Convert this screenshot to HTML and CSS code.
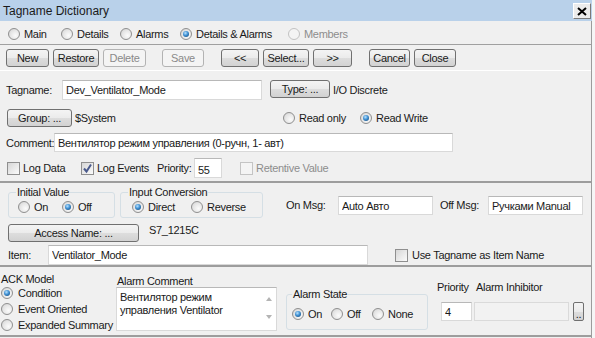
FILE: index.html
```html
<!DOCTYPE html>
<html lang="en">
<head>
    <meta charset="UTF-8">
    <meta name="viewport" content="width=device-width, initial-scale=1.0">
    <title>Tagname Dictionary</title>
    <link rel="stylesheet" href="styles.css">
</head>
<body>
    <div class="window">
        <div class="titlebar">
            <span class="title">Tagname Dictionary</span>
            <button class="close-btn" title="Close">
                <svg width="10" height="9" viewBox="0 0 10 9"><path d="M1 1 L9 8 M9 1 L1 8" stroke="#000" stroke-width="2"/></svg>
            </button>
        </div>

        <div class="frame">
            <!-- view selector -->
            <div class="tabs">
                <label class="opt"><span class="radio"></span>Main</label>
                <label class="opt"><span class="radio"></span>Details</label>
                <label class="opt"><span class="radio"></span>Alarms</label>
                <label class="opt"><span class="radio on"></span>Details &amp; Alarms</label>
                <label class="opt disabled"><span class="radio"></span>Members</label>
            </div>

            <div class="toolbar">
                <div class="btn-group g-edit">
                    <button class="btn">New</button>
                    <button class="btn">Restore</button>
                    <button class="btn" disabled>Delete</button>
                </div>
                <div class="btn-group g-save">
                    <button class="btn" disabled>Save</button>
                </div>
                <div class="btn-group g-nav">
                    <button class="btn">&lt;&lt;</button>
                    <button class="btn">Select...</button>
                    <button class="btn">&gt;&gt;</button>
                </div>
                <div class="btn-group g-close">
                    <button class="btn">Cancel</button>
                    <button class="btn">Close</button>
                </div>
            </div>

            <!-- main tag details -->
            <div class="panel panel-top">
                <div class="row row-tag">
                    <span>Tagname:</span>
                    <input class="field w-tag" type="text" value="Dev_Ventilator_Mode">
                    <button class="btn btn-type">Type: ...</button>
                    <span>I/O Discrete</span>
                </div>
                <div class="row row-group">
                    <button class="btn btn-group-sel">Group: ...</button>
                    <span>$System</span>
                    <label class="opt"><span class="radio"></span>Read only</label>
                    <label class="opt"><span class="radio on"></span>Read Write</label>
                </div>
                <div class="row row-comment">
                    <span>Comment:</span>
                    <input class="field w-comment" type="text" value="Вентилятор режим управления (0-ручн, 1- авт)">
                </div>
                <div class="row row-log">
                    <label class="opt"><span class="check"></span>Log Data</label>
                    <label class="opt"><span class="check checked"><svg width="11" height="11" viewBox="0 0 11 11"><path d="M2 5.5 L4.5 8.5 L9 1.5" fill="none" stroke="#4a5a8c" stroke-width="2"/></svg></span>Log Events</label>
                    <span>Priority:</span>
                    <input class="field w-prio" type="text" value="55">
                    <label class="opt disabled"><span class="check"></span>Retentive Value</label>
                </div>
            </div>

            <!-- discrete settings -->
            <div class="panel panel-mid">
                <div class="row row-discrete">
                    <fieldset class="fs fs-init">
                        <legend>Initial Value</legend>
                        <div class="fs-row">
                            <label class="opt"><span class="radio"></span>On</label>
                            <label class="opt"><span class="radio on"></span>Off</label>
                        </div>
                    </fieldset>
                    <fieldset class="fs fs-conv">
                        <legend>Input Conversion</legend>
                        <div class="fs-row">
                            <label class="opt"><span class="radio on"></span>Direct</label>
                            <label class="opt"><span class="radio"></span>Reverse</label>
                        </div>
                    </fieldset>
                    <span class="msg-label">On Msg:</span>
                    <input class="field w-msg" type="text" value="Auto Авто">
                    <span class="msg-label">Off Msg:</span>
                    <input class="field w-msg" type="text" value="Ручками Manual">
                </div>
                <div class="row row-access">
                    <button class="btn btn-access">Access Name: ...</button>
                    <span>S7_1215C</span>
                </div>
                <div class="row row-item">
                    <span>Item:</span>
                    <input class="field w-item" type="text" value="Ventilator_Mode">
                    <span class="check"></span>
                    <span>Use Tagname as Item Name</span>
                </div>
            </div>

            <!-- alarm settings -->
            <div class="panel panel-bottom">
                <div class="col col-ack">
                    <div class="col-label">ACK Model</div>
                    <label class="opt ack-opt"><span class="radio on"></span>Condition</label>
                    <label class="opt ack-opt"><span class="radio"></span>Event Oriented</label>
                    <label class="opt ack-opt"><span class="radio"></span>Expanded Summary</label>
                </div>
                <div class="col col-comment">
                    <div class="col-label">Alarm Comment</div>
                    <div class="memo">
                        <div class="memo-text">Вентилятор режим<br>управления Ventilator</div>
                        <div class="memo-scroll">
                            <span class="arrow-up"></span>
                            <span class="arrow-down"></span>
                        </div>
                    </div>
                </div>
                <div class="col col-state">
                    <fieldset class="fs fs-state">
                        <legend>Alarm State</legend>
                        <div class="fs-row">
                            <label class="opt"><span class="radio on"></span>On</label>
                            <label class="opt"><span class="radio"></span>Off</label>
                            <label class="opt"><span class="radio"></span>None</label>
                        </div>
                    </fieldset>
                </div>
                <div class="col col-prio">
                    <div class="prio-labels">
                        <span class="prio-label">Priority</span>
                        <span>Alarm Inhibitor</span>
                    </div>
                    <div class="prio-fields">
                        <input class="field w-aprio" type="text" value="4">
                        <input class="field w-inhib" type="text" value="" disabled>
                        <button class="btn btn-dots">..</button>
                    </div>
                </div>
            </div>
        </div>
    </div>
</body>
</html>
```

FILE: styles.css
```css
body { margin: 0; background: #f6f6f6; font-family: "Liberation Sans", Arial, sans-serif; font-size: 11px; letter-spacing: -0.3px; color: #1a1a1a; }
.window { width: 592px; height: 338px; background: #f0f0f0; }

/* title bar */
.titlebar { height: 21px; background: #b9d1ea; display: flex; align-items: center; justify-content: space-between; padding: 0 1px 0 3px; box-sizing: border-box; }
.title { font-size: 12px; letter-spacing: 0; }
.close-btn { width: 18px; height: 16px; margin-top: 1px; padding: 0; display: flex; align-items: center; justify-content: center; background: #ececec; border: 1px solid; border-color: #ffffff #7a7a7a #7a7a7a #ffffff; }

.frame { border-right: 1px solid #9c9c9c; height: 317px; }

/* radio / checkbox look */
.opt { display: flex; align-items: center; gap: 4px; white-space: nowrap; }
.opt.disabled { color: #8d8d8d; }
.radio { box-sizing: border-box; width: 12px; height: 12px; flex: none; border-radius: 50%; border: 1px solid #8f8f8f; background: radial-gradient(circle at 65% 65%, #fbfbfb 0, #e6e6e6 55%, #cdcdcd 100%); display: inline-flex; align-items: center; justify-content: center; }
.radio.on::after { content: ""; width: 6px; height: 6px; border-radius: 50%; background: radial-gradient(circle at 40% 35%, #b9e3ff 0, #3e8fd2 45%, #0f3c66 100%); }
.disabled .radio { border-color: #c2c2c2; background: #f4f4f4; }
.check { box-sizing: border-box; width: 13px; height: 13px; flex: none; border: 1px solid #8f8f8f; background: linear-gradient(135deg, #d6d6d6, #fbfbfb); display: inline-flex; align-items: center; justify-content: center; }
.disabled .check { border-color: #c4c4c4; background: #f4f4f4; }

/* buttons and fields */
.btn { box-sizing: border-box; height: 18px; padding: 0; font: inherit; letter-spacing: -0.3px; color: #1a1a1a; border: 1px solid #707070; border-radius: 3px; background: linear-gradient(#f4f4f4, #ebebeb 50%, #dddddd 51%, #d2d2d2); }
.btn:disabled { color: #8a8a8a; border-color: #b3b3b3; background: #f4f4f4; }
.field { box-sizing: border-box; height: 20px; padding: 0 3px; font: inherit; letter-spacing: -0.3px; color: #1a1a1a; background: #fff; border: 1px solid #d9d9d9; border-top-color: #b8b8b8; outline: none; }
.field:disabled { background: #f2f2f2; border-color: #dadada; }

.tabs { height: 20px; padding: 3px 0 0 8px; border-bottom: 1px solid #a0a0a0; display: grid; grid-template-columns: 53px 59px 60px 108px auto; align-items: center; }

.toolbar { height: 21px; padding: 4px 0 0 6px; display: flex; gap: 16px; }
.btn-group { display: grid; column-gap: 4px; grid-auto-flow: column; }
.btn-group .btn { width: 100%; }
.g-edit { grid-template-columns: 43px 46px 43px; }
.g-save { grid-template-columns: 42px; }
.g-nav { grid-template-columns: 38px 46px 39px; margin-left: 1px; }
.g-close { grid-template-columns: 41px 42px; margin-left: 1px; }

/* panels */
.panel-top { border-top: 1px solid #fff; padding: 9px 0 3px; }
.panel-mid { border-top: 2px solid #9d9d9d; padding-top: 4px; }
.panel-bottom { border-top: 2px solid #9d9d9d; border-bottom: 2px solid #9d9d9d; height: 68px; display: flex; }

.row { display: grid; align-items: center; }
.row-tag { height: 20px; padding-left: 6px; grid-template-columns: 56px 208px 63px auto; }
.row-tag .btn-type { width: 60px; align-self: start; }
.w-tag { width: 200px; }
.row-group { height: 18px; margin-top: 9px; padding-left: 7px; grid-template-columns: 68px 208px 77px auto; }
.btn-group-sel { width: 65px; }
.row-comment { height: 19px; margin-top: 6px; padding-left: 6px; grid-template-columns: 48px auto; }
.w-comment { width: 399px; height: 19px; }
.row-log { height: 20px; margin-top: 6px; padding-left: 7px; grid-template-columns: 74px 76px 37px 46px auto; }
.w-prio { width: 28px; padding-top: 3px; }
.row-log .opt { gap: 3px; }

/* group boxes */
.fs { margin: 0; padding: 0 0 0 7px; border: 1px solid #d5dfe5; border-radius: 3px; box-sizing: border-box; min-inline-size: 0; }
.fs legend { padding: 0 1px; line-height: 11px; }
.fs-row { display: grid; height: 13px; margin: 2px 0 0 3px; align-items: center; }
.fs-init { width: 107px; height: 31px; }
.fs-init .fs-row { margin-left: 2px; grid-template-columns: 44px auto; }
.fs-conv { width: 143px; height: 31px; }
.fs-conv .fs-row { margin-left: 4px; grid-template-columns: 59px auto; }

.row-discrete { height: 31px; padding-left: 8px; grid-template-columns: 112px 166px 52px 102px 48px 95px; align-items: end; }
.msg-label { line-height: 19px; margin-bottom: 3px; }
.w-msg { width: 95px; height: 19px; margin-bottom: 3px; }
.row-access { height: 17px; margin-top: 6px; padding-left: 8px; grid-template-columns: 141px auto; align-items: start; }
.btn-access { width: 131px; height: 18px; }
.row-access span { line-height: 13px; }
.row-item { height: 20px; margin-top: 4px; padding-left: 8px; grid-template-columns: 40px 347px 17px auto; }
.w-item { width: 320px; }

/* alarm area */
.col-label { line-height: 12px; }
.col-ack { width: 115px; padding: 6px 0 0 1px; }
.ack-opt { height: 16px; gap: 5px; }
.col-comment { width: 170px; padding-top: 9px; }
.col-comment .col-label { line-height: 11px; padding-left: 1px; }
.memo { box-sizing: border-box; width: 161px; height: 44px; background: #fff; border: 1px solid #d9d9d9; border-top-color: #b8b8b8; display: flex; }
.memo-text { flex: 1; padding: 3px 0 0 3px; line-height: 13px; }
.memo-scroll { width: 15px; display: flex; flex-direction: column; justify-content: space-between; align-items: center; padding: 9px 0 11px; }
.arrow-up { width: 0; height: 0; border-left: 3px solid transparent; border-right: 3px solid transparent; border-bottom: 4px solid #b4b4b4; }
.arrow-down { width: 0; height: 0; border-left: 3px solid transparent; border-right: 3px solid transparent; border-top: 4px solid #b4b4b4; }
.col-state { width: 151px; padding-top: 22px; }
.fs-state { width: 142px; height: 41px; padding-left: 5px; }
.fs-state .fs-row { margin: 7px 0 0; grid-template-columns: 39px 41px auto; }
.col-prio { padding-top: 14px; }
.prio-labels { display: flex; line-height: 12px; }
.prio-label { width: 39px; }
.prio-fields { display: flex; margin-top: 9px; padding-left: 4px; }
.w-aprio { width: 31px; height: 19px; }
.w-inhib { width: 95px; height: 19px; margin-left: 2px; }
.btn-dots { width: 11px; height: 19px; margin-left: 4px; border-radius: 2px; line-height: 22px; }
```
